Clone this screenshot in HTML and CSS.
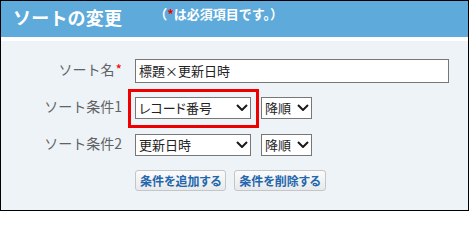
FILE: index.html
```html
<!DOCTYPE html>
<html lang="ja">
<head>
<meta charset="utf-8">
<title>ソートの変更</title>
<link rel="stylesheet" href="styles.css">
</head>
<body>
<div class="dialog">
  <div class="head">
    <h1 class="title">ソートの変更</h1>
    <span class="note">（<span class="req">*</span>は必須項目です。）</span>
  </div>
  <div class="body">
    <form class="form">
      <label class="lbl">ソート名<span class="req">*</span></label>
      <div class="ctl"><input class="text" type="text" value="標題×更新日時"></div>

      <label class="lbl">ソート条件1</label>
      <div class="ctl">
        <span class="sel highlighted">
          <select class="field wide"><option>レコード番号</option></select>
          <svg class="chev" width="12" height="7" viewBox="0 0 12 7"><polyline points="1,1 6,6 11,1" fill="none" stroke="#1a1a1a" stroke-width="2"/></svg>
          <span class="hl"></span>
        </span>
        <span class="sel">
          <select class="field narrow"><option>降順</option></select>
          <svg class="chev" width="12" height="7" viewBox="0 0 12 7"><polyline points="1,1 6,6 11,1" fill="none" stroke="#1a1a1a" stroke-width="2"/></svg>
        </span>
      </div>

      <label class="lbl">ソート条件2</label>
      <div class="ctl">
        <span class="sel">
          <select class="field wide"><option>更新日時</option></select>
          <svg class="chev" width="12" height="7" viewBox="0 0 12 7"><polyline points="1,1 6,6 11,1" fill="none" stroke="#1a1a1a" stroke-width="2"/></svg>
        </span>
        <span class="sel">
          <select class="field narrow"><option>降順</option></select>
          <svg class="chev" width="12" height="7" viewBox="0 0 12 7"><polyline points="1,1 6,6 11,1" fill="none" stroke="#1a1a1a" stroke-width="2"/></svg>
        </span>
      </div>

      <div class="ctl actions">
        <button type="button" class="btn">条件を追加する</button>
        <button type="button" class="btn">条件を削除する</button>
      </div>
    </form>
  </div>
</div>
</body>
</html>
```

FILE: styles.css
```css
* { box-sizing: border-box; }

html, body {
  margin: 0;
  padding: 0;
  background: #fff;
}

body {
  font-family: "Noto Sans CJK JP", "Noto Sans", sans-serif;
}

.dialog {
  width: 469px;
  height: 211px;
  border: 1px solid #000;
  display: flex;
  flex-direction: column;
  background: #eef3f7;
}

.head {
  height: 40px;
  flex: none;
  background: #5eaadb;
  border-bottom: 4px solid #fff;
  display: flex;
  align-items: flex-start;
  padding: 5px 0 0 12px;
  color: #fff;
}

.title {
  margin: 2px 0 0 0;
  font-size: 18px;
  line-height: 18px;
  font-weight: 700;
  letter-spacing: 0.2px;
}

.note {
  margin-left: 32px;
  font-size: 13px;
  line-height: 13px;
  font-weight: 700;
  margin-top: 1px;
}

.req {
  color: #ee0000;
}

.body {
  flex: 1;
  padding-top: 11px;
}

.form {
  display: grid;
  grid-template-columns: 121px 1fr;
  grid-auto-rows: 37px;
  column-gap: 13px;
  margin: 0;
}

.lbl {
  grid-column: 1;
  align-self: center;
  justify-self: end;
  font-size: 14px;
  line-height: 18px;
  color: #5f6366;
  margin-top: -3px;
  white-space: nowrap;
}

.lbl .req {
  font-size: 14px;
  margin-left: 1px;
}

.ctl {
  grid-column: 2;
  display: flex;
  align-items: center;
  gap: 10px;
}

.text {
  width: 314px;
  height: 24px;
  border: 1px solid #777;
  background: #fff;
  padding: 0 3px;
  margin: 0;
  font-family: "Noto Sans CJK JP", sans-serif;
  font-size: 13px;
  color: #222;
  border-radius: 0;
  outline: none;
}

.sel {
  position: relative;
  display: inline-flex;
}

.field {
  appearance: none;
  -webkit-appearance: none;
  height: 22px;
  border: 1px solid #777;
  border-radius: 0;
  background: #fff;
  margin: 0;
  padding: 0 0 0 3px;
  font-family: "Noto Sans CJK JP", sans-serif;
  font-size: 13px;
  line-height: 20px;
  color: #222;
  font-feature-settings: "palt";
}

.wide { width: 116px; }
.narrow { width: 51px; padding-left: 3px; }

.chev {
  position: absolute;
  right: 3px;
  top: 7px;
  pointer-events: none;
}

.hl {
  position: absolute;
  left: -7px;
  right: -8px;
  top: -8px;
  bottom: -9px;
  border: 3px solid #ee0000;
  pointer-events: none;
}

.actions {
  gap: 8px;
  margin-top: -2px;
}

.btn {
  height: 21px;
  padding: 0 4px;
  margin: 0;
  border: 1px solid #c3c6c9;
  border-radius: 3px;
  background: linear-gradient(#fbfbfb, #e8e9ea);
  font-family: "Noto Sans CJK JP", sans-serif;
  font-size: 12px;
  line-height: 19px;
  font-weight: 700;
  color: #2267ad;
  font-feature-settings: "palt";
  cursor: pointer;
}
```
